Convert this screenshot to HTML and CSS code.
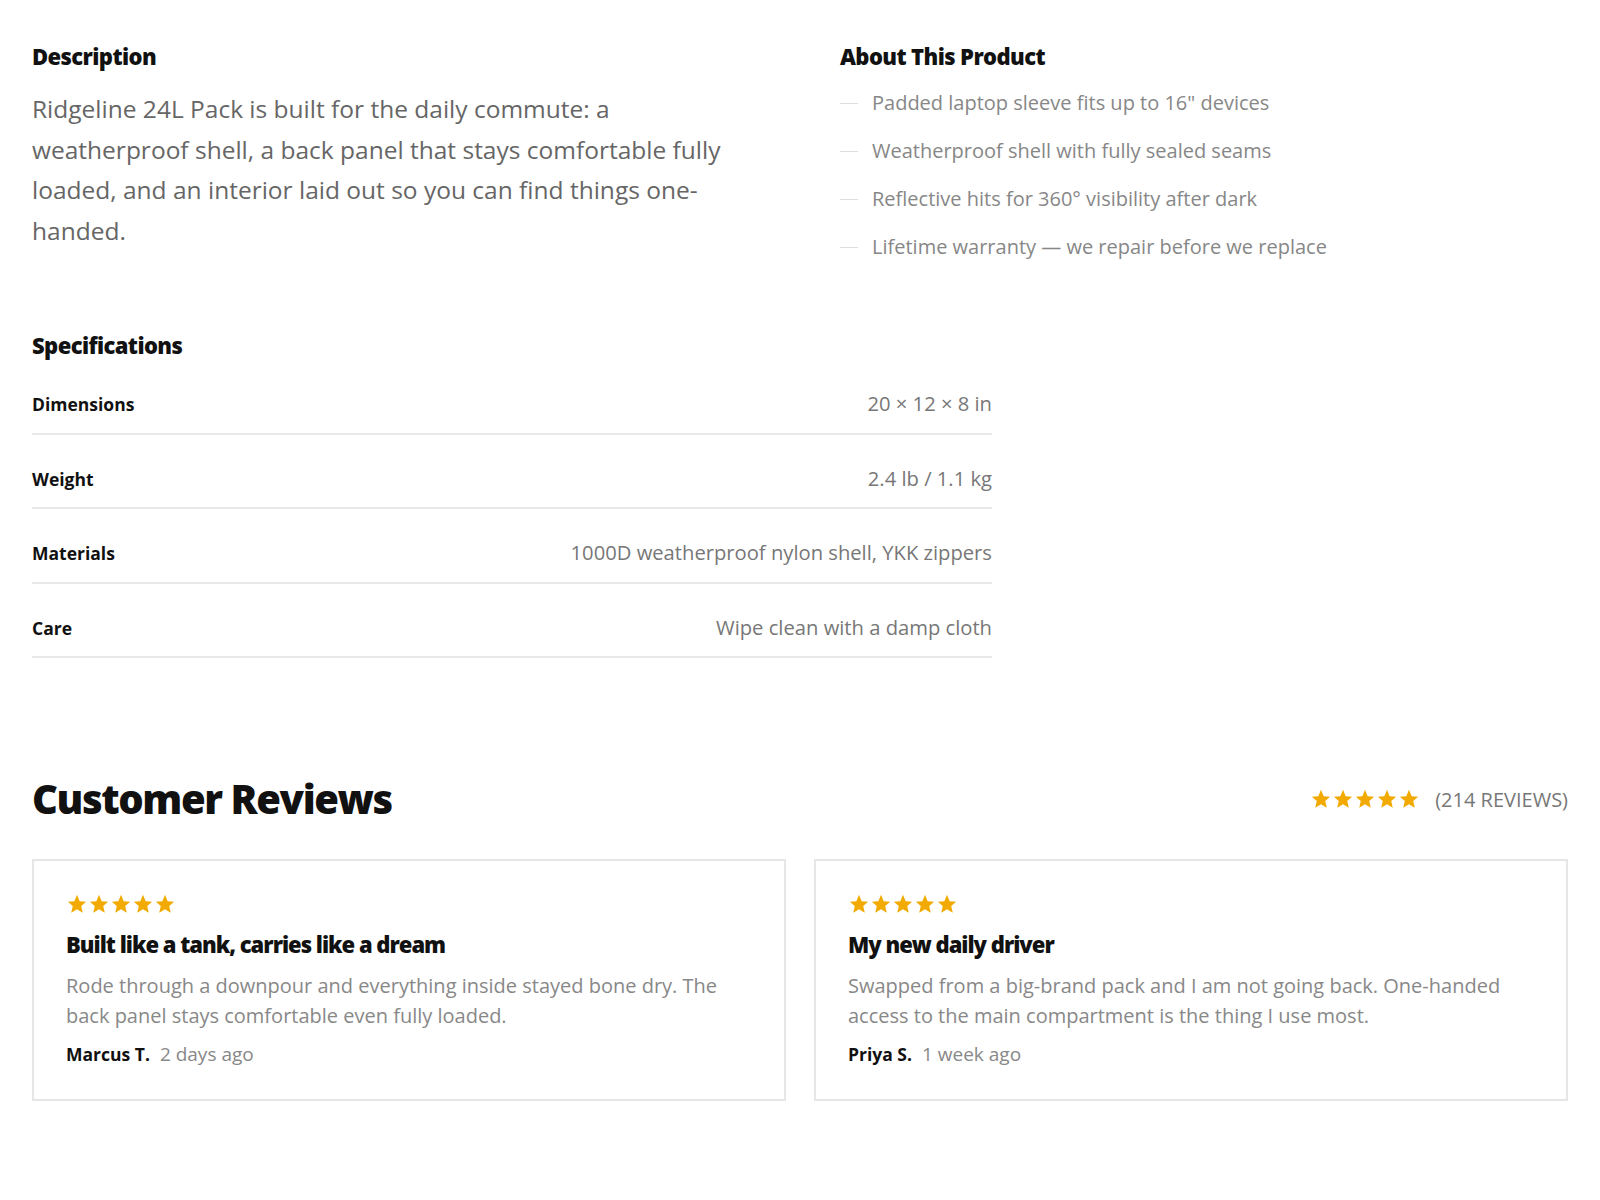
FILE: index.html
```html
<!DOCTYPE html>
<html lang="en">
<head>
  <meta charset="UTF-8" />
  <title>Ridgeline 24L Pack</title>
  <link rel="stylesheet" href="styles.css">
</head>
<body>
  <div class="page">
    <div class="top">
      <section>
        <h2 class="section-title">Description</h2>
        <p class="desc">Ridgeline 24L Pack is built for the daily commute: a weatherproof shell, a back panel that stays comfortable fully loaded, and an interior laid out so you can find things one-handed.</p>
      </section>
      <section>
        <h2 class="section-title">About This Product</h2>
        <ul class="features">
          <li>Padded laptop sleeve fits up to 16" devices</li>
          <li>Weatherproof shell with fully sealed seams</li>
          <li>Reflective hits for 360° visibility after dark</li>
          <li>Lifetime warranty — we repair before we replace</li>
        </ul>
      </section>
    </div>

    <section class="specs">
      <h2 class="section-title">Specifications</h2>
      <div class="spec-row"><span class="spec-label">Dimensions</span><span class="spec-value">20 × 12 × 8 in</span></div>
      <div class="spec-row"><span class="spec-label">Weight</span><span class="spec-value">2.4 lb / 1.1 kg</span></div>
      <div class="spec-row"><span class="spec-label">Materials</span><span class="spec-value">1000D weatherproof nylon shell, YKK zippers</span></div>
      <div class="spec-row"><span class="spec-label">Care</span><span class="spec-value">Wipe clean with a damp cloth</span></div>
    </section>

    <section class="reviews">
      <div class="reviews-head">
        <h2 class="reviews-title">Customer Reviews</h2>
        <div class="summary">
          <span class="stars">
            <svg viewBox="0 0 24 24"><path d="M12 2l2.9 6.9 7.1.6-5.4 4.7 1.7 7.3L12 17.6 5.7 21.5l1.7-7.3L2 9.5l7.1-.6z"/></svg>
            <svg viewBox="0 0 24 24"><path d="M12 2l2.9 6.9 7.1.6-5.4 4.7 1.7 7.3L12 17.6 5.7 21.5l1.7-7.3L2 9.5l7.1-.6z"/></svg>
            <svg viewBox="0 0 24 24"><path d="M12 2l2.9 6.9 7.1.6-5.4 4.7 1.7 7.3L12 17.6 5.7 21.5l1.7-7.3L2 9.5l7.1-.6z"/></svg>
            <svg viewBox="0 0 24 24"><path d="M12 2l2.9 6.9 7.1.6-5.4 4.7 1.7 7.3L12 17.6 5.7 21.5l1.7-7.3L2 9.5l7.1-.6z"/></svg>
            <svg viewBox="0 0 24 24"><path d="M12 2l2.9 6.9 7.1.6-5.4 4.7 1.7 7.3L12 17.6 5.7 21.5l1.7-7.3L2 9.5l7.1-.6z"/></svg>
          </span>
          <span class="count">(214 REVIEWS)</span>
        </div>
      </div>

      <div class="cards">
        <div class="card">
          <span class="stars">
            <svg viewBox="0 0 24 24"><path d="M12 2l2.9 6.9 7.1.6-5.4 4.7 1.7 7.3L12 17.6 5.7 21.5l1.7-7.3L2 9.5l7.1-.6z"/></svg>
            <svg viewBox="0 0 24 24"><path d="M12 2l2.9 6.9 7.1.6-5.4 4.7 1.7 7.3L12 17.6 5.7 21.5l1.7-7.3L2 9.5l7.1-.6z"/></svg>
            <svg viewBox="0 0 24 24"><path d="M12 2l2.9 6.9 7.1.6-5.4 4.7 1.7 7.3L12 17.6 5.7 21.5l1.7-7.3L2 9.5l7.1-.6z"/></svg>
            <svg viewBox="0 0 24 24"><path d="M12 2l2.9 6.9 7.1.6-5.4 4.7 1.7 7.3L12 17.6 5.7 21.5l1.7-7.3L2 9.5l7.1-.6z"/></svg>
            <svg viewBox="0 0 24 24"><path d="M12 2l2.9 6.9 7.1.6-5.4 4.7 1.7 7.3L12 17.6 5.7 21.5l1.7-7.3L2 9.5l7.1-.6z"/></svg>
          </span>
          <h3 class="card-title">Built like a tank, carries like a dream</h3>
          <p class="card-text">Rode through a downpour and everything inside stayed bone dry. The back panel stays comfortable even fully loaded.</p>
          <div class="byline"><span class="author">Marcus T.</span><span class="when">2 days ago</span></div>
        </div>
        <div class="card">
          <span class="stars">
            <svg viewBox="0 0 24 24"><path d="M12 2l2.9 6.9 7.1.6-5.4 4.7 1.7 7.3L12 17.6 5.7 21.5l1.7-7.3L2 9.5l7.1-.6z"/></svg>
            <svg viewBox="0 0 24 24"><path d="M12 2l2.9 6.9 7.1.6-5.4 4.7 1.7 7.3L12 17.6 5.7 21.5l1.7-7.3L2 9.5l7.1-.6z"/></svg>
            <svg viewBox="0 0 24 24"><path d="M12 2l2.9 6.9 7.1.6-5.4 4.7 1.7 7.3L12 17.6 5.7 21.5l1.7-7.3L2 9.5l7.1-.6z"/></svg>
            <svg viewBox="0 0 24 24"><path d="M12 2l2.9 6.9 7.1.6-5.4 4.7 1.7 7.3L12 17.6 5.7 21.5l1.7-7.3L2 9.5l7.1-.6z"/></svg>
            <svg viewBox="0 0 24 24"><path d="M12 2l2.9 6.9 7.1.6-5.4 4.7 1.7 7.3L12 17.6 5.7 21.5l1.7-7.3L2 9.5l7.1-.6z"/></svg>
          </span>
          <h3 class="card-title">My new daily driver</h3>
          <p class="card-text">Swapped from a big-brand pack and I am not going back. One-handed access to the main compartment is the thing I use most.</p>
          <div class="byline"><span class="author">Priya S.</span><span class="when">1 week ago</span></div>
        </div>
      </div>
    </section>
  </div>
</body>
</html>
```

FILE: styles.css
```css
body {
  margin: 0;
  font-family: 'Open Sans', sans-serif;
  background: #fff;
  color: #111;
}
.page {
  padding: 41px 32px 60px;
}
.top {
  display: grid;
  grid-template-columns: 1fr 1fr;
  gap: 80px;
}
.section-title {
  margin: 0;
  font-size: 22px;
  line-height: 30px;
  font-weight: 800;
  letter-spacing: -0.6px;
  color: #111;
}
.desc {
  margin: 18px 0 0;
  font-size: 24.5px;
  line-height: 40.5px;
  color: #666;
  max-width: 715px;
}
.features {
  list-style: none;
  margin: 17px 0 0;
  padding: 0;
}
.features li {
  display: flex;
  align-items: center;
  gap: 14px;
  font-size: 20px;
  line-height: 30px;
  color: #878787;
  margin-bottom: 18px;
}
.features li::before {
  content: "";
  width: 18px;
  height: 1px;
  background: #ddd;
}
.specs {
  margin-top: 50px;
  width: 960px;
}
.spec-row {
  display: flex;
  justify-content: space-between;
  align-items: baseline;
  padding: 28px 0 13.5px;
  border-bottom: 2px solid #e8e8e8;
}
.spec-label {
  font-size: 17.5px;
  line-height: 30px;
  font-weight: 700;
  color: #111;
}
.spec-value {
  font-size: 20.2px;
  line-height: 30px;
  color: #777;
}
.reviews {
  margin-top: 116px;
}
.reviews-head {
  display: flex;
  justify-content: space-between;
  align-items: center;
}
.reviews-title {
  margin: 0;
  font-size: 40px;
  line-height: 50px;
  font-weight: 800;
  letter-spacing: -1.4px;
  color: #111;
}
.summary {
  display: flex;
  align-items: center;
  gap: 15px;
}
.stars {
  display: flex;
}
.stars svg {
  width: 22px;
  height: 22px;
  fill: #f2a900;
}
.count {
  font-size: 20px;
  color: #777;
}
.cards {
  display: grid;
  grid-template-columns: 1fr 1fr;
  gap: 28px;
  margin-top: 35px;
}
.card {
  border: 2px solid #e6e6e6;
  padding: 32px 32px 31px;
}
.card-title {
  margin: 13px 0 0;
  font-size: 22px;
  line-height: 32px;
  font-weight: 800;
  letter-spacing: -1px;
  color: #111;
}
.card-text {
  margin: 11px 0 0;
  font-size: 20px;
  line-height: 29.5px;
  color: #888;
}
.byline {
  margin-top: 10px;
  display: flex;
  align-items: baseline;
  gap: 10px;
  line-height: 28px;
}
.author {
  font-size: 17.5px;
  font-weight: 700;
  color: #111;
}
.when {
  font-size: 19px;
  color: #888;
}
```
